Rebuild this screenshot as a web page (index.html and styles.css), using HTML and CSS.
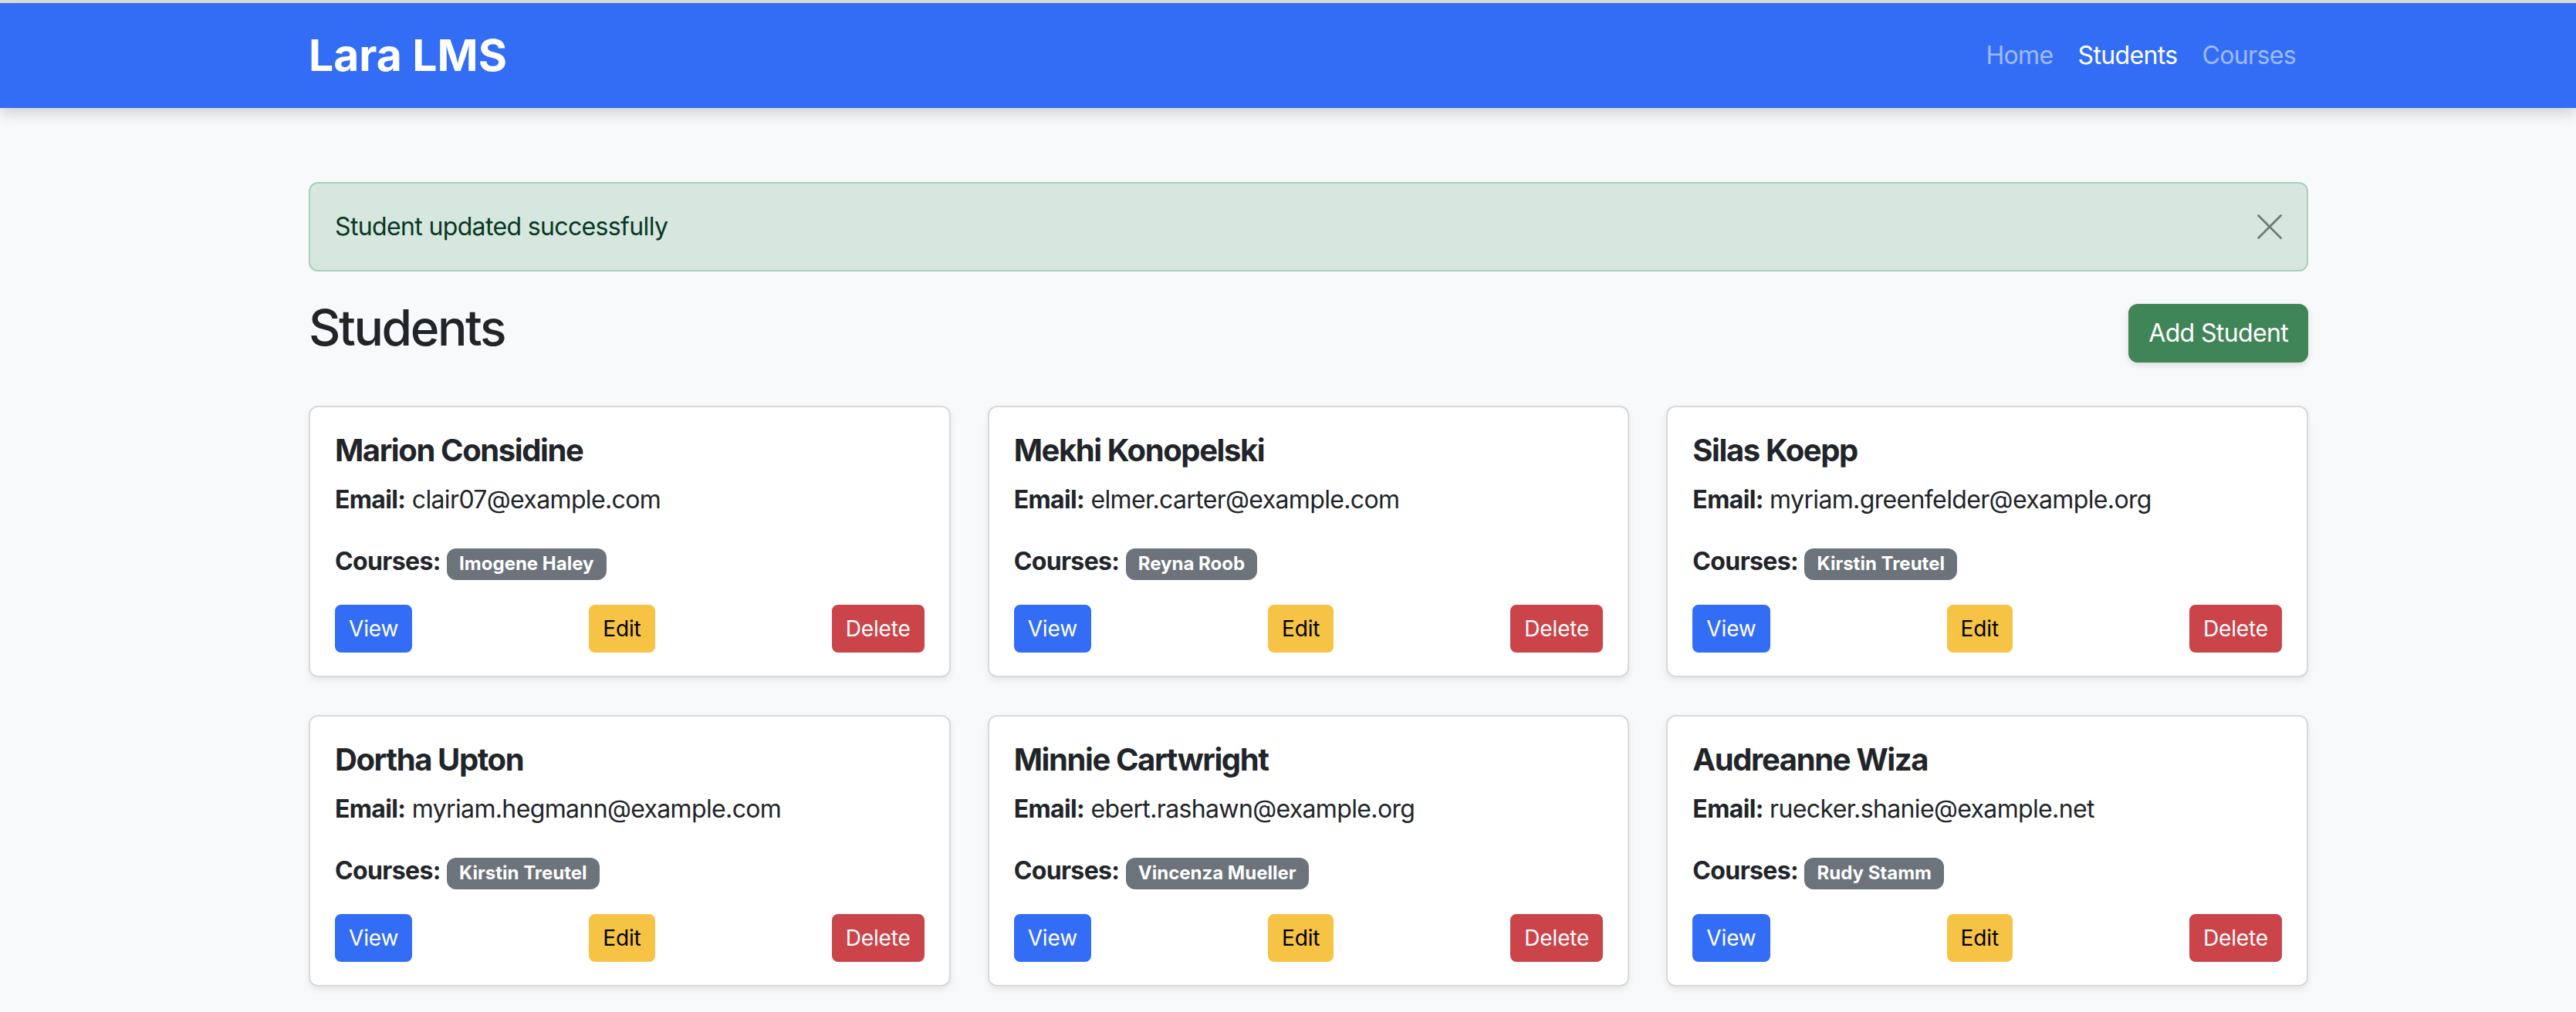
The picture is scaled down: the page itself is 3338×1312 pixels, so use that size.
FILE: index.html
```html
<!DOCTYPE html>
<html lang="en">
<head>
<meta charset="utf-8">
<title>Lara LMS - Students</title>
<link rel="stylesheet" href="styles.css">
</head>
<body>
<div class="top-strip"></div>
<nav class="navbar">
  <div class="nav-inner">
    <a class="brand" href="#">Lara LMS</a>
    <ul class="nav-links">
      <li><a class="nav-link" href="#">Home</a></li>
      <li><a class="nav-link active" href="#">Students</a></li>
      <li><a class="nav-link" href="#">Courses</a></li>
    </ul>
  </div>
</nav>
<main class="container">
  <div class="alert">
    <span class="alert-text">Student updated successfully</span>
    <button class="btn-close" type="button" aria-label="Close">
      <svg viewBox="0 0 32 32" width="32" height="32"><path d="M1.5 1.5 L30.5 30.5 M30.5 1.5 L1.5 30.5" stroke="currentColor" stroke-width="2.6" stroke-linecap="round" fill="none"/></svg>
    </button>
  </div>
  <div class="page-head">
    <h2 class="page-title">Students</h2>
    <a class="btn btn-success" href="#">Add Student</a>
  </div>
  <div class="card-grid">
    <div class="card"><h5 class="card-title">Marion Considine</h5><p class="card-text"><strong>Email:</strong> clair07@example.com</p><p class="card-text"><strong>Courses:</strong> <span class="badge">Imogene Haley</span></p><div class="actions"><a class="btn-sm btn-primary" href="#">View</a><a class="btn-sm btn-warning" href="#">Edit</a><a class="btn-sm btn-danger" href="#">Delete</a></div></div>
    <div class="card"><h5 class="card-title">Mekhi Konopelski</h5><p class="card-text"><strong>Email:</strong> elmer.carter@example.com</p><p class="card-text"><strong>Courses:</strong> <span class="badge">Reyna Roob</span></p><div class="actions"><a class="btn-sm btn-primary" href="#">View</a><a class="btn-sm btn-warning" href="#">Edit</a><a class="btn-sm btn-danger" href="#">Delete</a></div></div>
    <div class="card"><h5 class="card-title">Silas Koepp</h5><p class="card-text"><strong>Email:</strong> myriam.greenfelder@example.org</p><p class="card-text"><strong>Courses:</strong> <span class="badge">Kirstin Treutel</span></p><div class="actions"><a class="btn-sm btn-primary" href="#">View</a><a class="btn-sm btn-warning" href="#">Edit</a><a class="btn-sm btn-danger" href="#">Delete</a></div></div>
    <div class="card"><h5 class="card-title">Dortha Upton</h5><p class="card-text"><strong>Email:</strong> myriam.hegmann@example.com</p><p class="card-text"><strong>Courses:</strong> <span class="badge">Kirstin Treutel</span></p><div class="actions"><a class="btn-sm btn-primary" href="#">View</a><a class="btn-sm btn-warning" href="#">Edit</a><a class="btn-sm btn-danger" href="#">Delete</a></div></div>
    <div class="card"><h5 class="card-title">Minnie Cartwright</h5><p class="card-text"><strong>Email:</strong> ebert.rashawn@example.org</p><p class="card-text"><strong>Courses:</strong> <span class="badge">Vincenza Mueller</span></p><div class="actions"><a class="btn-sm btn-primary" href="#">View</a><a class="btn-sm btn-warning" href="#">Edit</a><a class="btn-sm btn-danger" href="#">Delete</a></div></div>
    <div class="card"><h5 class="card-title">Audreanne Wiza</h5><p class="card-text"><strong>Email:</strong> ruecker.shanie@example.net</p><p class="card-text"><strong>Courses:</strong> <span class="badge">Rudy Stamm</span></p><div class="actions"><a class="btn-sm btn-primary" href="#">View</a><a class="btn-sm btn-warning" href="#">Edit</a><a class="btn-sm btn-danger" href="#">Delete</a></div></div>
  </div>
</main>
</body>
</html>
```
FILE: styles.css
```css
* { box-sizing: border-box; }
html, body { margin: 0; padding: 0; }
body {
  background: #f8f9fa;
  color: #212529;
  font-family: Inter, "Noto Sans", "Liberation Sans", sans-serif;
  font-size: 32px;
  line-height: 1.5;
  letter-spacing: -0.02em;
  min-height: 1312px;
}
a { text-decoration: none; }
.top-strip { height: 4px; background: #dcdcdc; }
.navbar {
  background: #336df5;
  height: 136px;
  box-shadow: 0 8px 16px rgba(0,0,0,.15);
}
.nav-inner {
  width: 2591px;
  margin-left: 400px;
  height: 100%;
  display: flex;
  align-items: center;
  justify-content: space-between;
}
.brand {
  color: #fff;
  font-weight: 700;
  font-size: 57px;
  line-height: 1.2;
  letter-spacing: 0;
}
.nav-links {
  list-style: none;
  margin: 0;
  padding: 0;
  display: flex;
}
.nav-link {
  display: block;
  padding: 16px 16px;
  color: rgba(255,255,255,.55);
  font-size: 32px;
  line-height: 48px;
}
.nav-link.active { color: #fff; }
.container {
  width: 2591px;
  margin-left: 400px;
}
.alert {
  margin-top: 96px;
  margin-bottom: 32px;
  padding: 32px;
  background: #d5e7df;
  border: 2px solid #a8d0bb;
  border-radius: 12px;
  color: #0a3622;
  display: flex;
  align-items: center;
  justify-content: space-between;
}
.alert-text { line-height: 48px; }
.btn-close {
  background: none;
  border: 0;
  padding: 0;
  width: 32px;
  height: 32px;
  color: #6a7a71;
  display: flex;
}
.page-head {
  display: flex;
  align-items: center;
  justify-content: space-between;
  margin-bottom: 46px;
}
.page-title {
  margin: 0 0 16px;
  padding-top: 3px;
  font-size: 64px;
  font-weight: 500;
  line-height: 1.2;
  letter-spacing: -0.037em;
}
.btn {
  display: inline-block;
  font-size: 32px;
  line-height: 48px;
  padding: 12px 24px;
  border: 2px solid transparent;
  border-radius: 12px;
}
.btn-success {
  background: #408558;
  border-color: #408558;
  color: #fff;
  box-shadow: 0 3px 8px rgba(0,0,0,.12);
}
.card-grid {
  display: grid;
  grid-template-columns: repeat(3, 1fr);
  column-gap: 48px;
  row-gap: 49px;
}
.card {
  background: #fff;
  border: 2px solid #d9d9d9;
  border-radius: 12px;
  box-shadow: 0 4px 8px rgba(0,0,0,.075);
  padding: 32px 32px 30px;
}
.card-title {
  margin: 0 0 16px;
  font-size: 40px;
  font-weight: 700;
  line-height: 48px;
  letter-spacing: -0.035em;
}
.card-text {
  margin: 0 0 32px;
  line-height: 48px;
}
.card-text strong { font-weight: 700; }
.badge {
  display: inline-block;
  font-size: 24px;
  font-weight: 700;
  line-height: 1;
  padding: 8px 16px 9px;
  border-radius: 12px;
  background: #6c737b;
  color: #fff;
  letter-spacing: 0;
}
.actions {
  display: flex;
  justify-content: space-between;
}
.btn-sm {
  display: inline-block;
  font-size: 28px;
  line-height: 42px;
  padding: 8px 16px;
  border: 2px solid transparent;
  border-radius: 8px;
  letter-spacing: -0.005em;
}
.btn-primary { background: #336df5; border-color: #336df5; color: #fff; }
.btn-warning { background: #f6c344; border-color: #f6c344; color: #000; }
.btn-danger { background: #cb444a; border-color: #cb444a; color: #fff; }
```
